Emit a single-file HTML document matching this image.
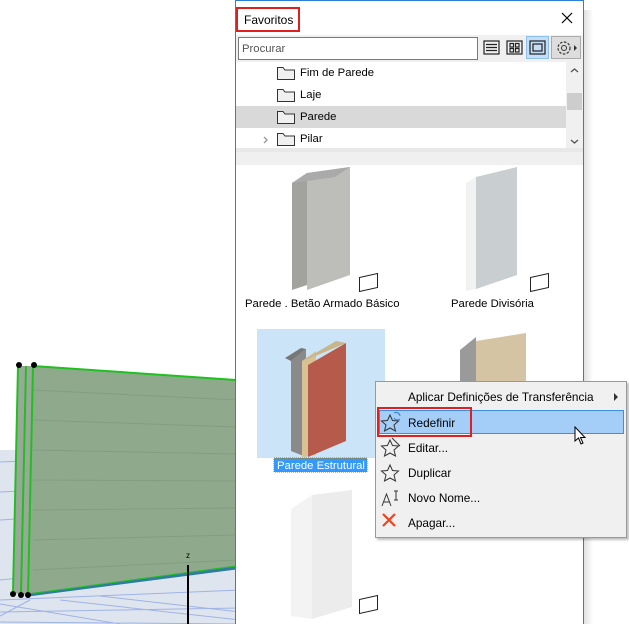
<!DOCTYPE html>
<html><head><meta charset="utf-8"><style>
*{margin:0;padding:0;box-sizing:border-box}
body{width:629px;height:624px;overflow:hidden;background:#fff;font-family:"Liberation Sans",sans-serif;font-size:11.3px;color:#000;position:relative}
.a{position:absolute}
.t{position:absolute;white-space:nowrap;line-height:14px}
.m{font-size:11.8px}
</style></head><body>
<svg class="a" style="left:0;top:0" width="240" height="624">
<rect x="0" y="450" width="240" height="174" fill="#dfe5ee"/>
<g stroke="#9fb3e6" stroke-width="1" fill="none">
<path d="M0 462 L240 452 M0 492 L240 480 M0 520 L240 505 M0 580 L240 555"/>
<path d="M0 600 L240 590 M0 612 L240 608 M0 622 L240 624 M0 604 L120 624 M60 600 L240 620"/>
<path d="M30 600 L0 616 M100 596 L240 612"/>
</g>
<polygon points="18,366 33,366 236,380 236,568 28,595 13,593" fill="#8ea98b"/>
<polygon points="18,366 33,366 28,595 13,593" fill="#9aa89a"/>
<g stroke="#7c967a" stroke-width="1" opacity=".6">
<path d="M33 390 L236 400 M33 420 L236 427 M33 450 L236 454 M33 480 L236 481 M33 510 L236 508 M33 540 L236 535 M33 570 L236 560"/>
</g>
<path d="M33 366 L236 380" stroke="#20c020" stroke-width="2"/>
<path d="M28 595 L236 568" stroke="#2e7d9e" stroke-width="3"/>
<path d="M28 594 L236 566" stroke="#20c020" stroke-width="1"/>
<path d="M18 366 L13 593 M26 366 L21 594 M33 366 L28 595" stroke="#20c020" stroke-width="2"/>
<g fill="#000"><circle cx="19" cy="365" r="3"/><circle cx="34" cy="365" r="3"/><circle cx="13" cy="594" r="3"/><circle cx="21" cy="595" r="3"/><circle cx="28" cy="595" r="3"/></g>
<path d="M188 565 V624" stroke="#000" stroke-width="2"/>
<text x="186" y="558" font-size="8" font-family="Liberation Sans">z</text>
</svg>
<div class="a" style="left:583px;top:10px;width:10px;height:614px;background:linear-gradient(90deg,#ddd,#fff)"></div>
<div class="a" style="left:235px;top:0;width:349px;height:624px;background:#fff;border-left:1px solid #2b7fd6;border-right:1px solid #2b7fd6;border-top:1px solid #2b7fd6"></div>
<div class="t" style="left:244px;top:13px;font-size:12px">Favoritos</div>
<div class="a" style="left:236px;top:7px;width:64px;height:25px;border:2px solid #e02020"></div>
<svg class="a" style="left:561px;top:12px" width="12" height="12"><path d="M1 1L11 11M11 1L1 11" stroke="#000" stroke-width="1.2"/></svg>
<div class="a" style="left:236px;top:35px;width:347px;height:27px;background:#f0f0f0"></div>
<div class="a" style="left:238px;top:37px;width:240px;height:23px;background:#fff;border:1px solid #7a7a7a"></div>
<div class="t" style="left:242px;top:42px;color:#555">Procurar</div>
<svg class="a" style="left:480px;top:36px" width="104" height="26">
<g fill="none" stroke="#222" stroke-width="1.2">
<rect x="4" y="5" width="15" height="13"/><path d="M6 8.5H17M6 11.5H17M6 14.5H17"/>
<rect x="27" y="5" width="15" height="13"/><rect x="30" y="7.5" width="3.5" height="3.5"/><rect x="35.5" y="7.5" width="3.5" height="3.5"/><rect x="30" y="12.5" width="3.5" height="3.5"/><rect x="35.5" y="12.5" width="3.5" height="3.5"/>
</g>
<rect x="46.5" y="0.5" width="22" height="22" fill="#c4def6" stroke="#8cc0ee"/>
<g fill="none" stroke="#222" stroke-width="1.2"><rect x="50" y="5" width="15" height="13"/><rect x="53" y="8" width="9" height="7"/></g>
<rect x="71.5" y="0.5" width="29" height="22" fill="#ddd" stroke="#aaa"/>
<circle cx="84" cy="12" r="6" fill="none" stroke="#333" stroke-width="1.2" stroke-dasharray="2.5 1.5"/><circle cx="84" cy="12" r="2.5" fill="none" stroke="#333"/>
<path d="M94 9L97 12L94 15Z" fill="#333"/>
</svg>
<div class="a" style="left:236px;top:106px;width:330px;height:22px;background:#d9d9d9"></div>
<svg class="a" style="left:262px;top:62px" width="40" height="88">
<g fill="#f0f0f0" stroke="#333" stroke-width="1"><path d="M15.5 5.5H21L23 8H32.5V17.5H15.5Z"/><path d="M15.5 27.5H21L23 30H32.5V39.5H15.5Z"/><path d="M15.5 49.5H21L23 52H32.5V61.5H15.5Z"/><path d="M15.5 71.5H21L23 74H32.5V83.5H15.5Z"/></g>
<path d="M2 75L5 78L2 81" fill="none" stroke="#999" stroke-width="1.3"/>
</svg>
<div class="t" style="left:300px;top:66px">Fim de Parede</div>
<div class="t" style="left:300px;top:88px">Laje</div>
<div class="t" style="left:300px;top:110px">Parede</div>
<div class="t" style="left:300px;top:132px">Pilar</div>
<div class="a" style="left:566px;top:62px;width:17px;height:86px;background:#f0f0f0"></div>
<div class="a" style="left:567px;top:93px;width:15px;height:17px;background:#cdcdcd"></div>
<svg class="a" style="left:566px;top:62px" width="17" height="86"><path d="M5 10L8.5 7L12 10M5 78L8.5 81L12 78" fill="none" stroke="#555" stroke-width="1.3"/></svg>
<div class="a" style="left:236px;top:148px;width:347px;height:17px;background:#f0f0f0;border-top:4px solid #e8e8e8"></div>
<svg class="a" style="left:236px;top:165px" width="347" height="459">
<polygon points="56,18 71,8 71,120 56,125" fill="#a2a29e"/>
<polygon points="71,8 114,2 114,110 71,125" fill="#bdbdb9"/>
<polygon points="56,18 71,8 114,2 99,12" fill="#aaa"/>
<polygon points="230,18 240,12 240,124 230,126" fill="#f2f2f2"/>
<polygon points="240,12 281,2 281,110 240,124" fill="#c9ced0"/>
<g fill="#fff" stroke="#222" stroke-width="1"><path d="M123.5 112.5L141.5 108.5V122.5L123.5 126.5Z"/><path d="M294.5 112.5L312.5 108.5V122.5L294.5 126.5Z"/><path d="M123.5 273.5L141.5 269.5V283.5L123.5 287.5Z"/><path d="M123.5 434.5L141.5 430.5V444.5L123.5 448.5Z"/></g>
<rect x="21" y="164" width="128" height="129" fill="#cce4f7"/>
<polygon points="55,196 70,184 70,292 55,286" fill="#8a8a8a"/>
<polygon points="66,196 80,186 80,290 66,292" fill="#d8c293"/>
<polygon points="72,200 110,178 110,276 72,292" fill="#b65a4c"/>
<polygon points="66,196 82,190 110,178 100,176" fill="#c7b58b"/>
<polygon points="49,193 65,183 70,184 55,196" fill="#777"/>
<polygon points="224,185 240,172 240,230 224,230" fill="#9a9a9a"/>
<polygon points="240,176 290,168 290,230 240,230" fill="#d4c4a4"/>
<polygon points="55,344 76,330 76,454 55,451" fill="#f3f3f3"/>
<polygon points="76,330 116,325 116,442 76,454" fill="#ececec"/>
<rect x="38" y="293" width="93" height="14" fill="#3399ff" stroke="#b57a00" stroke-dasharray="1 1"/>
</svg>
<div class="t" style="left:245px;top:297px">Parede . Betão Armado Básico</div>
<div class="t" style="left:451px;top:297px">Parede Divisória</div>
<div class="t" style="left:277px;top:459px;color:#fff">Parede Estrutural</div>
<div class="a" style="left:375px;top:381px;width:252px;height:157px;background:#f0f0f0;border:1px solid #999;box-shadow:2px 2px 2px rgba(0,0,0,.25)"></div>
<div class="a" style="left:379px;top:410px;width:245px;height:24px;background:#a4cdf7;border:1px solid #3d8ee0"></div>
<div class="a" style="left:377px;top:407px;width:95px;height:30px;border:2px solid #e02020"></div>
<div class="t m" style="left:408px;top:390px">Aplicar Definições de Transferência</div>
<svg class="a" style="left:612px;top:392px" width="8" height="10"><path d="M2 1L6 5L2 9Z" fill="#333"/></svg>
<div class="t m" style="left:408px;top:416px">Redefinir</div>
<div class="t m" style="left:408px;top:441px">Editar...</div>
<div class="t m" style="left:408px;top:466px">Duplicar</div>
<div class="t m" style="left:408px;top:491px">Novo Nome...</div>
<div class="t m" style="left:408px;top:516px">Apagar...</div>
<svg class="a" style="left:380px;top:410px" width="24" height="120">
<g fill="none" stroke="#333" stroke-width="1">
<path d="M10 5L12.5 10.5L18.5 11L14 15L15.5 21L10 18L4.5 21L6 15L1.5 11L7.5 10.5Z"/>
<path d="M10 30L12.5 35.5L18.5 36L14 40L15.5 46L10 43L4.5 46L6 40L1.5 36L7.5 35.5Z"/>
<path d="M10 55L12.5 60.5L18.5 61L14 65L15.5 71L10 68L4.5 71L6 65L1.5 61L7.5 60.5Z"/>
<path d="M2 96L6.5 84L11 96M3.5 92H9.5M14 81H18M16 81V90M14 90H18"/>
</g>
<path d="M14 3A4 4 0 0 1 20 6M20 9A4 4 0 0 1 14 8" stroke="#2b7fd6" fill="none"/>
<path d="M12 28L20 36" stroke="#333"/>
<path d="M3 104L15 116M15 104L3 116" stroke="#f0421c" stroke-width="2.2"/>
</svg>
<svg class="a" style="left:574px;top:426px" width="14" height="20"><path d="M1 1V15L4.5 12L7 18L9 17L6.5 11.5H11Z" fill="#fff" stroke="#000"/></svg>
</body></html>
